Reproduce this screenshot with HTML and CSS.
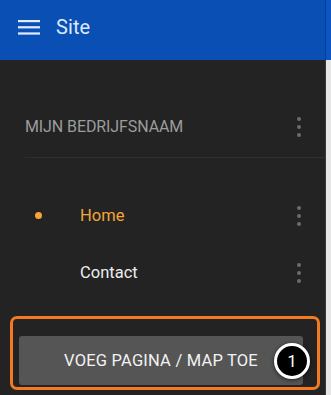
FILE: index.html
```html
<!DOCTYPE html>
<html>
<head>
<meta charset="utf-8">
<link rel="stylesheet" href="styles.css">
</head>
<body>
<div class="app">
  <header class="topbar">
    <div class="topbar-main">
      <svg class="burger" width="22" height="16" viewBox="0 0 22 16"><rect x="0" y="1" width="22" height="2.2" fill="#e3ecff"/><rect x="0" y="7.2" width="22" height="2.2" fill="#e3ecff"/><rect x="0" y="13.4" width="22" height="2.2" fill="#e3ecff"/></svg>
      <span class="title">Site</span>
    </div>
    <div class="topbar-edge"></div>
  </header>
  <div class="content">
    <nav class="panel">
      <div class="company">
        <span class="company-name">MIJN BEDRIJFSNAAM</span>
        <span class="kebab"><i></i><i></i><i></i></span>
      </div>
      <ul class="menu">
        <li class="item active"><span class="bullet"></span><span class="label">Home</span><span class="kebab"><i></i><i></i><i></i></span></li>
        <li class="item"><span class="bullet"></span><span class="label">Contact</span><span class="kebab"><i></i><i></i><i></i></span></li>
      </ul>
      <div class="highlight">
        <button class="add-btn">VOEG PAGINA / MAP TOE</button>
        <span class="badge">1</span>
      </div>
    </nav>
    <div class="edge"></div>
  </div>
</div>
</body>
</html>
```
FILE: styles.css
```css
* { box-sizing: border-box; }
html, body { margin: 0; padding: 0; }
body {
  width: 331px;
  height: 395px;
  overflow: hidden;
  background: #232323;
  font-family: Roboto, "Liberation Sans", Arial, sans-serif;
}
.app { display: flex; flex-direction: column; height: 395px; }
.topbar { display: flex; height: 60px; background: #0a4fb3; }
.topbar-main {
  flex: 1;
  display: flex;
  align-items: center;
  padding-left: 18px;
  padding-bottom: 7px;
  border-right: 1px solid #083f94;
}
.topbar-edge { width: 5px; background: #0c55c2; }
.burger { display: block; }
.title {
  margin-left: 16px;
  color: #dde8ff;
  font-size: 20px;
  letter-spacing: 0.1px;
}
.content { flex: 1; display: flex; }
.panel {
  flex: 1;
  background: #232323;
  border-right: 1px solid #3a3a3a;
  position: relative;
}
.edge { width: 5px; background: #e6e6e6; }
.company {
  margin-top: 36px;
  margin-left: 25px;
  height: 62px;
  display: flex;
  align-items: center;
  justify-content: space-between;
  padding-right: 24px;
  border-bottom: 1px solid #2f2f2f;
}
.company-name {
  color: #9c9c9c;
  font-size: 16px;
  letter-spacing: -0.1px;
}
.kebab { display: flex; flex-direction: column; gap: 4px; width: 4px; }
.kebab i { display: block; width: 4px; height: 4px; border-radius: 50%; background: #6c6c6c; }
.menu { list-style: none; margin: 29px 0 0; padding: 0; }
.item {
  height: 57px;
  display: flex;
  align-items: center;
  padding-left: 35px;
  padding-right: 24px;
}
.bullet { width: 7px; height: 7px; border-radius: 50%; margin-right: 38px; }
.active .bullet { background: #f5a531; }
.label { flex: 1; color: #ededed; font-size: 16.5px; }
.active .label { color: #f4a53a; }
.highlight {
  position: relative;
  margin: 15px 0 0 10px;
  width: 310px;
  height: 74px;
  border: 3px solid #f27a20;
  border-radius: 7px;
  padding: 17px 14px 0 6px;
}
.add-btn {
  display: block;
  width: 284px;
  height: 49px;
  border: none;
  border-radius: 3px;
  background: #555555;
  color: #f2f2f2;
  font-family: inherit;
  font-size: 16.5px;
  font-weight: 400;
  letter-spacing: 0.2px;
  padding: 0;
  text-align: center;
}
.badge {
  position: absolute;
  left: 261px;
  top: 24px;
  width: 36px;
  height: 36px;
  border-radius: 50%;
  background: #000;
  border: 3px solid #fff;
  color: #fff;
  font-size: 17px;
  display: flex;
  align-items: center;
  justify-content: center;
  box-shadow: 0 1px 4px rgba(0,0,0,0.6);
}
```
